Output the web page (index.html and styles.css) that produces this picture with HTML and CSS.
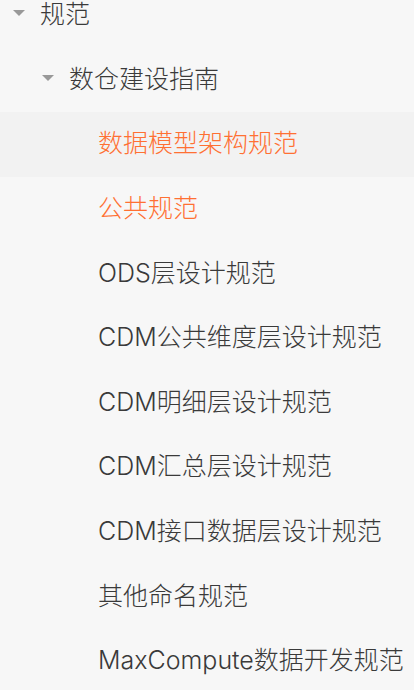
FILE: index.html
```html
<!DOCTYPE html>
<html lang="zh-CN">
<head>
    <meta charset="UTF-8">
    <meta name="viewport" content="width=device-width, initial-scale=1.0">
    <title>规范</title>
    <link rel="stylesheet" href="styles.css">
</head>
<body>
    <ul class="tree">
        <li class="node level-1 open"><span class="caret"></span>规范</li>
        <li class="node level-2 open"><span class="caret"></span>数仓建设指南</li>
        <li class="node level-3 active current">数据模型架构规范</li>
        <li class="node level-3 active">公共规范</li>
        <li class="node level-3">ODS层设计规范</li>
        <li class="node level-3">CDM公共维度层设计规范</li>
        <li class="node level-3">CDM明细层设计规范</li>
        <li class="node level-3">CDM汇总层设计规范</li>
        <li class="node level-3">CDM接口数据层设计规范</li>
        <li class="node level-3">其他命名规范</li>
        <li class="node level-3">MaxCompute数据开发规范</li>
    </ul>
</body>
</html>
```

FILE: styles.css
```css
body {
    margin: 0;
    background: #f7f7f7;
    font-family: "Inter", "Noto Sans CJK SC", sans-serif;
    overflow: hidden;
}

.tree {
    list-style: none;
    margin: -17px 0 0 0;
    padding: 0;
}

.node {
    display: flex;
    align-items: center;
    box-sizing: border-box;
    height: 64.6px;
    padding-bottom: 6px;
    font-size: 25px;
    font-weight: 300;
    color: #3a3a3a;
    white-space: nowrap;
}

.level-1 {
    padding-left: 13px;
}

.level-2 {
    padding-left: 42px;
}

.level-3 {
    padding-left: 98px;
}

.caret {
    width: 0;
    height: 0;
    border-left: 6px solid transparent;
    border-right: 6px solid transparent;
    border-top: 6px solid #999;
    margin-right: 15px;
    margin-top: 2px;
}

.active {
    color: #ff7033;
}

.current {
    background: #f2f2f2;
}
```
